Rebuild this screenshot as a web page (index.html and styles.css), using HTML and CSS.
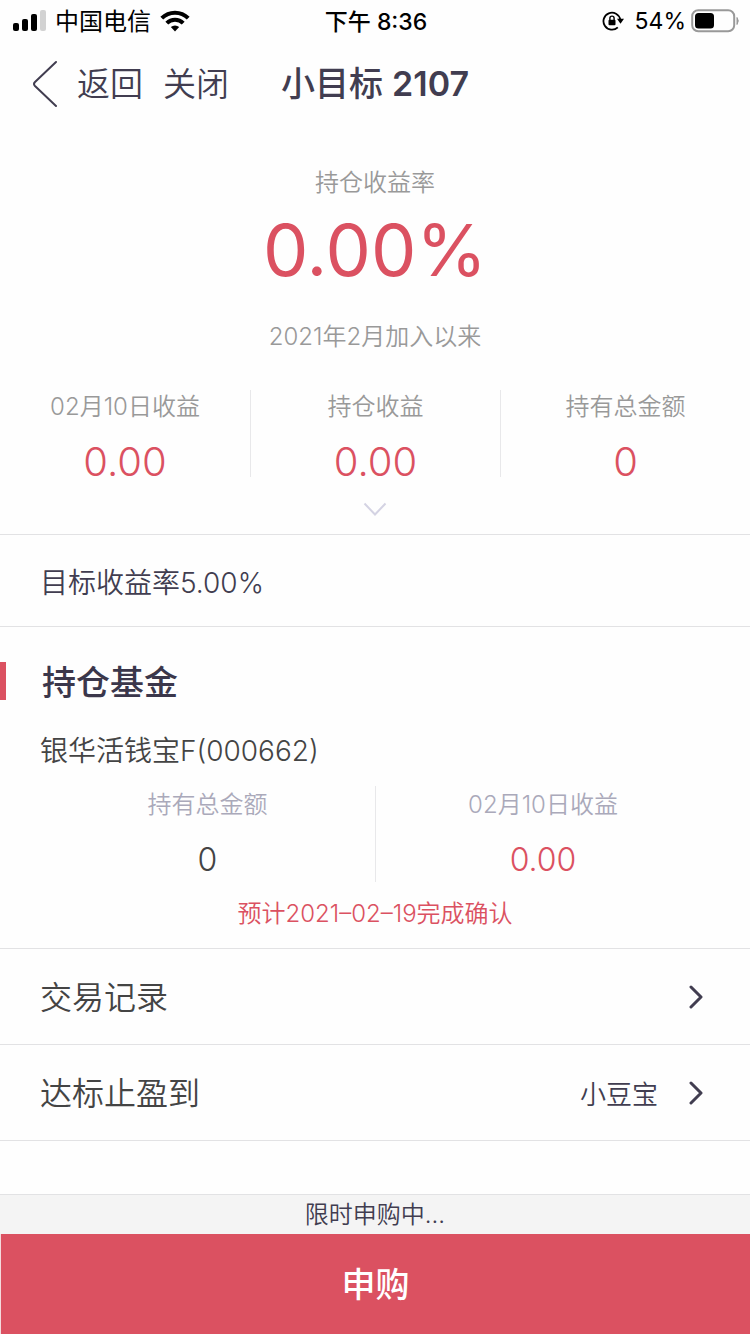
FILE: index.html
```html
<!DOCTYPE html>
<html lang="zh-CN">
<head>
<meta charset="utf-8">
<meta name="viewport" content="width=device-width, initial-scale=1">
<title>小目标2107</title>
<link rel="stylesheet" href="styles.css">
</head>
<body>
<div class="status">
  <div class="status-left">
    <svg width="34" height="22" viewBox="0 0 34 22" aria-hidden="true"><rect x="1" y="13" width="6" height="8" rx="2"/><rect x="10" y="9" width="6" height="12" rx="2"/><rect x="19" y="4" width="6" height="17" rx="2"/><rect x="28" y="0" width="6" height="21" rx="2" fill="#d2d2d2"/></svg>
    <span class="carrier">中国电信</span>
    <svg width="30" height="22" viewBox="0 0 30 22" fill="none" stroke="#000" aria-hidden="true"><path d="M1.8 8.2a18.5 18.5 0 0 1 26.400 0" stroke-width="4"/><path d="M6.800 13.200a11.500 11.500 0 0 1 16.400 0" stroke-width="4"/><path d="M15 21.500l-4.200-4.400a6 6 0 0 1 8.400 0z" fill="#000" stroke="none"/></svg>
  </div>
  <div class="time">下午 8:36</div>
  <div class="status-right">
    <svg width="22" height="22" viewBox="0 0 22 22" fill="none" stroke="#000" stroke-width="1.800" aria-hidden="true"><path d="M15.800 17.400A8.500 8.500 0 1 1 18.300 9.500"/><path d="M15 8.800h7l-3.500 5z" fill="#000" stroke="none"/><rect x="6.500" y="9.800" width="7" height="5.500" rx="1" fill="#000" stroke="none"/><path d="M7.900 10V8.200a2.100 2.100 0 0 1 4.200 0V10" stroke-width="1.400"/></svg>
    <span>54%</span>
    <svg class="battery" width="49" height="24" viewBox="0 0 49 24" aria-hidden="true"><rect x="1.200" y="1.200" width="42" height="21" rx="6" fill="none" stroke="#999" stroke-width="2"/><rect x="4" y="4" width="19" height="15.500" rx="3.500"/><path d="M46 8.500q2.500 3.200 0 7z" fill="#999" stroke="#999"/></svg>
  </div>
</div>
<header class="nav">
  <button class="back" type="button"><svg width="26" height="48" viewBox="0 0 26 48" fill="none" stroke="#413d50" stroke-width="2" stroke-linecap="round" stroke-linejoin="round" aria-hidden="true"><path d="M24 2L3 22Q1 24 3 26L24 46"/></svg><span>返回</span></button>
  <button class="close" type="button">关闭</button>
  <h1 class="title">小目标 <span class="number">2107</span></h1>
</header>
<main>
  <section class="summary">
    <p class="label">持仓收益率</p>
    <p class="rate">0.00%</p>
    <p class="label">2021年2月加入以来</p>
    <dl class="stats">
      <div class="stat"><dt>02月10日收益</dt><dd>0.00</dd></div>
      <div class="stat"><dt>持仓收益</dt><dd>0.00</dd></div>
      <div class="stat"><dt>持有总金额</dt><dd>0</dd></div>
    </dl>
    <button class="expand" type="button" aria-label="展开"><svg width="24" height="14" viewBox="0 0 24 14" fill="none" stroke="#d4d3e3" stroke-width="2"><path d="M1.500 1.500L12 12.500 22.500 1.500"/></svg></button>
  </section>
  <p class="target">目标收益率5.00%</p>
  <section class="holding">
    <h2 class="heading">持仓基金</h2>
    <p class="fund">银华活钱宝F(000662)</p>
    <dl class="pair">
      <div class="cell"><dt>持有总金额</dt><dd>0</dd></div>
      <div class="cell"><dt>02月10日收益</dt><dd class="gain">0.00</dd></div>
    </dl>
    <p class="notice">预计2021–02–19完成确认</p>
  </section>
  <nav>
    <a class="row" href="#records"><span>交易记录</span><svg class="arrow" width="16" height="24" viewBox="0 0 16 24" aria-hidden="true"><path d="M3 2L13 12 3 22"/></svg></a>
    <a class="row" href="#destination"><span>达标止盈到</span><span class="value">小豆宝</span><svg class="arrow" width="16" height="24" viewBox="0 0 16 24" aria-hidden="true"><path d="M3 2L13 12 3 22"/></svg></a>
  </nav>
</main>
<footer class="footer">
  <p class="hint">限时申购中...</p>
  <button class="buy" type="button">申购</button>
</footer>
</body>
</html>
```
FILE: styles.css
```css
* { box-sizing: border-box; }
body {
  margin: 0;
  min-height: 100vh;
  display: flex;
  flex-direction: column;
  background: #fefefe;
  color: #444;
  font-family: Inter, "Noto Sans CJK SC", sans-serif;
  font-weight: 350;
}
h1, h2, p, dl, dd { margin: 0; }
svg { display: block; flex: none; }
button {
  margin: 0;
  padding: 0;
  border: 0;
  background: none;
  color: inherit;
  font: inherit;
}
a { color: inherit; text-decoration: none; }

.status {
  display: grid;
  grid-template-columns: 1fr auto 1fr;
  align-items: center;
  height: 40px;
  padding: 0 10px 0 12px;
  color: #000;
  font-size: 24px;
  font-weight: 400;
  line-height: 40px;
}
.status-left, .status-right { display: flex; align-items: center; gap: 9px; }
.carrier, .time { padding-top: 2px; }
.status-right { justify-content: flex-end; gap: 5px; }
.status-right span { font-size: 23px; margin-left: 6px; }
.time { font-size: 23px; font-weight: 500; }

.nav {
  display: grid;
  grid-template-columns: auto 1fr;
  align-items: center;
  height: 88px;
  padding: 0 32px;
  color: #413d50;
  font-size: 33px;
  line-height: 40px;
}
.back { display: flex; align-items: center; gap: 19px; grid-area: 1 / 1; }
.close { grid-area: 1 / 2; justify-self: start; margin-left: 20px; }
.title {
  grid-area: 1 / 1 / 2 / 3;
  justify-self: center;
  font-size: 34px;
  font-weight: 500;
  pointer-events: none;
}
.number { font-weight: 600; }

.summary {
  padding-top: 37px;
  border-bottom: 1px solid #e2e2e4;
  text-align: center;
}
.label, .stat dt, .cell dt {
  color: #999;
  font-size: 24px;
  line-height: 36px;
}
.rate {
  margin: 2px 0 22px;
  color: #db5161;
  font-size: 72px;
  font-weight: 400;
  line-height: 94px;
}
.stats { display: grid; grid-template-columns: repeat(3, 1fr); margin-top: 35px; }
.stat { height: 87px; }
.stat + .stat { border-left: 1px solid #e8e8ea; }
.stat dt { line-height: 34px; }
.stat dd {
  margin-top: 14px;
  color: #db5161;
  font-size: 40px;
  font-weight: 300;
  line-height: 48px;
}
.expand { display: block; margin: 25px auto 18px; }

.target {
  padding: 5px 40px 0;
  border-bottom: 1px solid #e2e2e4;
  color: #413d50;
  font-size: 28px;
  line-height: 86px;
}
.holding { padding: 35px 0 16px; border-bottom: 1px solid #e2e2e4; }
.heading {
  padding: 4px 0 0 36px;
  border-left: 6px solid #db5161;
  color: #3b374b;
  font-size: 34px;
  font-weight: 500;
  line-height: 34px;
}
.fund { margin-top: 31px; padding: 0 40px; font-size: 28px; line-height: 40px; }
.pair {
  display: grid;
  grid-template-columns: 1fr 1fr;
  margin: 15px 40px 14px;
  text-align: center;
}
.cell { height: 96px; }
.cell + .cell { border-left: 1px solid #e8e8ea; }
.cell dt { color: #aaa9ba; line-height: 38px; }
.cell dd { margin-top: 14px; font-size: 32px; line-height: 44px; }
.cell .gain { color: #db5161; }
.notice {
  color: #db5161;
  font-size: 24px;
  line-height: 36px;
  text-align: center;
}
.row {
  display: flex;
  align-items: center;
  height: 96px;
  padding: 0 46px 0 40px;
  border-bottom: 1px solid #e2e2e4;
  font-size: 32px;
  line-height: 44px;
}
.row span { padding-top: 2px; }
.row .value { margin-left: auto; margin-right: 30px; padding-top: 4px; color: #413d50; font-size: 26px; }
.arrow {
  margin-left: auto;
  fill: none;
  stroke: #413d50;
  stroke-width: 3;
  stroke-linecap: round;
  stroke-linejoin: round;
}
.value + .arrow { margin-left: 0; }

.footer { margin-top: auto; text-align: center; }
.hint {
  border-top: 1px solid #e2e2e4;
  background: #f4f4f4;
  color: #413d50;
  font-size: 24px;
  line-height: 39px;
}
.buy {
  display: block;
  width: 100%;
  height: 100px;
  padding-bottom: 4px;
  border-left: 1px solid #f4dadd;
  background: #db5161;
  color: #fff;
  font-size: 34px;
  font-weight: 500;
}
```
